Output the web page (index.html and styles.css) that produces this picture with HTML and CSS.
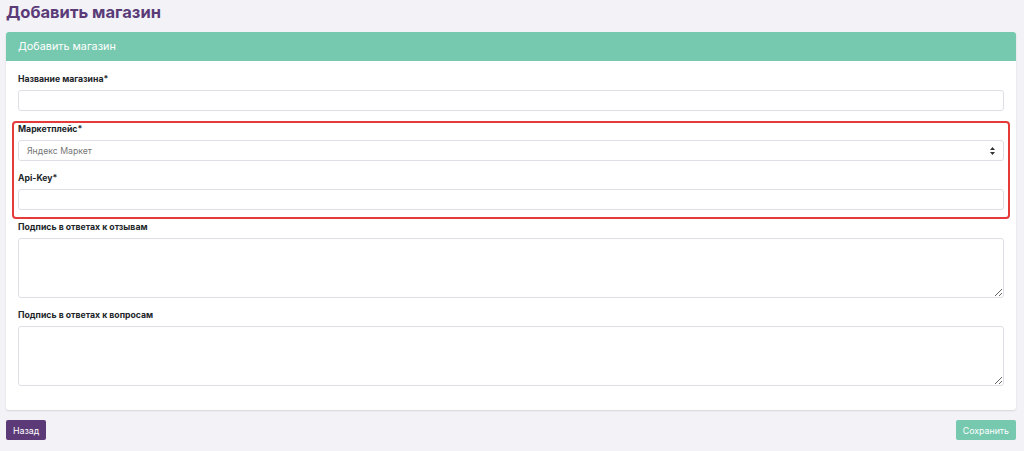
FILE: index.html
```html
<!DOCTYPE html>
<html lang="ru">
<head>
    <meta charset="UTF-8">
    <meta name="viewport" content="width=device-width, initial-scale=1.0">
    <title>Добавить магазин</title>
    <link rel="stylesheet" href="styles.css">
</head>
<body>
    <h1 class="page-title">Добавить магазин</h1>

    <div class="card">
        <div class="card-header">Добавить магазин</div>
        <form class="card-body">
            <div class="form-group">
                <label class="form-label" for="name">Название магазина*</label>
                <input class="form-control" id="name" type="text">
            </div>

            <div class="highlight">
                <div class="form-group">
                    <label class="form-label" for="market">Маркетплейс*</label>
                    <div class="select-wrap">
                        <select class="form-control form-select" id="market">
                            <option>Яндекс Маркет</option>
                            <option>Ozon</option>
                            <option>Wildberries</option>
                        </select>
                        <svg class="select-arrows" width="5" height="8" viewBox="0 0 5 8">
                            <path d="M2.5 0 L5 3 H0 Z M2.5 8 L5 5 H0 Z" fill="#333"/>
                        </svg>
                    </div>
                </div>
                <div class="form-group last">
                    <label class="form-label" for="apikey">Api-Key*</label>
                    <input class="form-control" id="apikey" type="text">
                </div>
            </div>

            <div class="form-group">
                <label class="form-label" for="sign-reviews">Подпись в ответах к отзывам</label>
                <textarea class="form-control area" id="sign-reviews"></textarea>
            </div>
            <div class="form-group last">
                <label class="form-label" for="sign-questions">Подпись в ответах к вопросам</label>
                <textarea class="form-control area" id="sign-questions"></textarea>
            </div>
        </form>
    </div>

    <div class="actions">
        <button class="btn btn-back" type="button">Назад</button>
        <button class="btn btn-save" type="button">Сохранить</button>
    </div>
</body>
</html>
```

FILE: styles.css
```css
body {
    margin: 0;
    padding: 0 8px 0 6px;
    background-color: #f2f2f7;
    font-family: Inter, "Noto Sans", "Liberation Sans", sans-serif;
    color: #212529;
}
.page-title {
    margin: 0;
    font-size: 16.5px;
    line-height: 24px;
    font-weight: 700;
    color: #5a3b78;
}
.card {
    margin-top: 8px;
    background-color: #fff;
    border-radius: 3px;
    box-shadow: 0 1px 2px rgba(0, 0, 0, 0.12);
    overflow: hidden;
}
.card-header {
    height: 29px;
    line-height: 29px;
    padding: 0 12px;
    background-color: #76c8ae;
    color: #fff;
    font-size: 10.8px;
}
.card-body {
    padding: 12px 12px 24px;
}
.form-group {
    margin-bottom: 11px;
}
.form-group.last {
    margin-bottom: 0;
}
.form-label {
    display: block;
    font-size: 8.7px;
    line-height: 13px;
    font-weight: 700;
    margin-bottom: 4px;
}
.form-control {
    display: block;
    box-sizing: border-box;
    width: 100%;
    height: 21px;
    margin: 0;
    padding: 0 8px;
    border: 1px solid #dddfe5;
    border-radius: 3px;
    background-color: #fff;
    font-family: inherit;
    font-size: 8.7px;
    color: #777;
    outline: none;
}
.area {
    height: 60px;
    resize: vertical;
}
.highlight {
    margin: -1px -6px 2px;
    padding: 0 4px 7px;
    border: 2px solid #e5393a;
    border-radius: 4px;
}
.select-wrap {
    position: relative;
}
.form-select {
    appearance: none;
    -webkit-appearance: none;
}
.select-arrows {
    position: absolute;
    right: 9px;
    top: 7px;
    pointer-events: none;
}
.actions {
    display: flex;
    justify-content: space-between;
    margin-top: 10px;
}
.btn {
    height: 20px;
    padding: 0 7px;
    border: none;
    border-radius: 2px;
    color: #fff;
    font-family: inherit;
    font-size: 8.8px;
    cursor: pointer;
}
.btn-back {
    background-color: #5c3a78;
}
.btn-save {
    background-color: #76c8ae;
}
```
